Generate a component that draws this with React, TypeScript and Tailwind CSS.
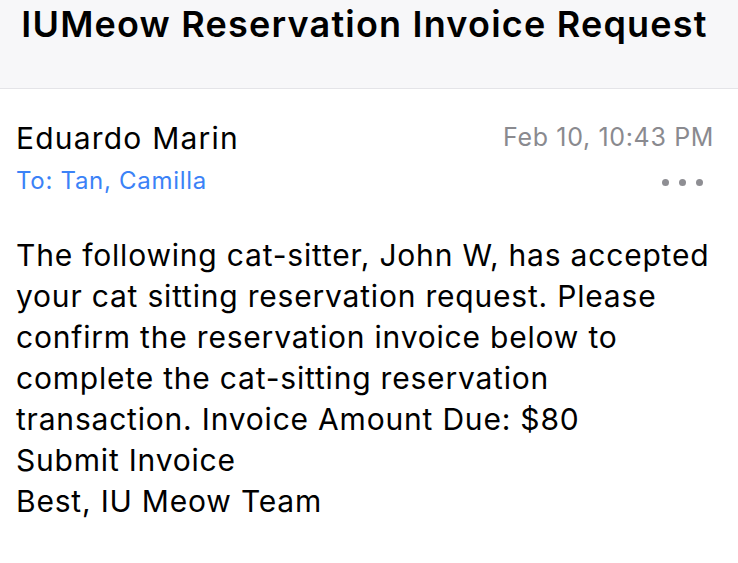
import React from "react";

export default function App() {
  return (
    <div className="w-[738px] h-[563px] bg-white overflow-hidden" style={{ fontFamily: "Inter, 'Noto Sans', sans-serif" }}>
      <div className="h-[89px] bg-[#f7f7f9] border-b border-[#e4e4e8] flex justify-center pr-[9px]">
        <h1 className="text-[36px] font-semibold text-black leading-none pt-[6px] tracking-[1.2px] whitespace-nowrap">
          IUMeow Reservation Invoice Request
        </h1>
      </div>
      <div className="pl-4 pr-[16px]">
        <div className="flex justify-between items-start pt-[33px]">
          <div className="flex flex-col">
            <div className="text-[30px] leading-[32px] text-black tracking-[1.2px]">Eduardo Marin</div>
            <div className="text-[24px] leading-[26px] text-[#3b82f7] mt-[14px] tracking-[0.7px]">To: Tan, Camilla</div>
          </div>
          <div className="flex flex-col items-end pt-[1px] pr-[8px]">
            <div className="text-[25px] leading-[28px] text-[#8a8a8f] tracking-[0.65px]">Feb 10, 10:43 PM</div>
            <div className="flex gap-[10px] mt-[28px] pr-[11px]">
              <span className="w-[7px] h-[7px] rounded-full bg-[#8e8e93]" />
              <span className="w-[7px] h-[7px] rounded-full bg-[#8e8e93]" />
              <span className="w-[7px] h-[7px] rounded-full bg-[#8e8e93]" />
            </div>
          </div>
        </div>
        <div className="mt-[41px] text-[30px] leading-[41px] text-black tracking-[0.8px]">
          <p>
            The following cat-sitter, John W, has accepted your cat sitting reservation request. Please confirm the reservation invoice below to complete the cat-sitting reservation transaction. Invoice Amount Due: $80
          </p>
          <p>Submit Invoice</p>
          <p>Best, IU Meow Team</p>
        </div>
      </div>
    </div>
  );
}
